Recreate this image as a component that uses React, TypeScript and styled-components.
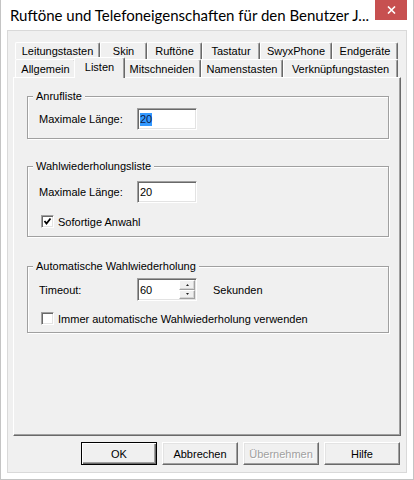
import styled, { createGlobalStyle, css } from 'styled-components'

const GlobalStyle = createGlobalStyle`
  html, body {
    margin: 0;
    padding: 0;
    background: #fff;
  }
  body {
    font-family: 'Liberation Sans', Arial, sans-serif;
    font-size: 11px;
    color: #000;
  }
  * {
    box-sizing: border-box;
  }
`

// Window frame
const Window = styled.div`
  width: 414px;
  height: 480px;
  display: flex;
  flex-direction: column;
  background: #fff;
  border: 1px solid #c4c4c4;
  border-top: none;
`

const TitleBar = styled.div`
  flex: none;
  height: 30px;
  display: flex;
  align-items: flex-start;
`

const Title = styled.div`
  font-family: Lato, 'Noto Sans', sans-serif;
  font-size: 15px;
  line-height: 20px;
  padding: 5px 0 0 9px;
  white-space: nowrap;
`

const CloseButton = styled.div`
  margin: 0 6px 0 auto;
  width: 32px;
  height: 20px;
  background: #c75050;
  display: flex;
  align-items: center;
  justify-content: center;
`

const Client = styled.div`
  flex: 1;
  margin: 0 6px 6px;
  border: 1px solid #d9d9d9;
  background: #f0f0f0;
  padding: 11px 5px 7px;
  display: flex;
  flex-direction: column;
`

// Tab control
const TabRow = styled.div<{ $h: number }>`
  flex: none;
  display: flex;
  height: ${(p) => p.$h}px;
  padding-left: 2px;
`

const Tab = styled.div<{ $w: number; $active?: boolean }>`
  width: ${(p) => p.$w}px;
  display: flex;
  align-items: center;
  justify-content: center;
  background: #f0f0f0;
  border-top: 1px solid #fff;
  border-left: 1px solid #fff;
  border-right: 1px solid #696969;
  border-radius: 2px 2px 0 0;
  box-shadow: inset -1px 0 #a0a0a0;
  white-space: nowrap;
  ${(p) =>
    p.$active &&
    css`
      width: ${p.$w + 4}px;
      margin: -2px -2px -1px;
      padding-bottom: 2px;
      position: relative;
      z-index: 1;
    `}
`

const Panel = styled.div`
  flex: none;
  height: 359px;
  border-top: 1px solid #fff;
  border-left: 1px solid #fff;
  border-right: 1px solid #696969;
  border-bottom: 1px solid #696969;
  box-shadow: inset -1px -1px #a0a0a0;
  padding: 18px 11px 0 13px;
`

// Group boxes
const Group = styled.div<{ $mt: number; $pb: number }>`
  margin-top: ${(p) => p.$mt}px;
  padding: 0 11px ${(p) => p.$pb}px;
  border: 1px solid #a0a0a0;
  box-shadow: inset 1px 1px #fff, 1px 1px #fff;
`

const Caption = styled.div`
  display: table;
  margin: -7px 0 0 -6px;
  padding: 0 3px;
  line-height: 13px;
  background: #f0f0f0;
`

const Row = styled.div<{ $mt: number; $h: number }>`
  display: flex;
  align-items: center;
  margin-top: ${(p) => p.$mt}px;
  height: ${(p) => p.$h}px;
`

const Label = styled.span`
  width: 98px;
`

const Field = styled.div<{ $h: number }>`
  width: 60px;
  height: ${(p) => p.$h}px;
  display: flex;
  align-items: center;
  padding: 1px 1px 1px 2px;
  background: #fff;
  border: 1px solid;
  border-color: #a0a0a0 #fff #fff #a0a0a0;
  box-shadow: inset 1px 1px #696969, inset -1px -1px #e3e3e3;
`

const Selected = styled.span`
  background: #3399ff;
  color: #0b1a4a;
  line-height: 13px;
`

const SpinColumn = styled.div`
  margin-left: auto;
  width: 16px;
  height: 100%;
  display: flex;
  flex-direction: column;
`

const SpinButton = styled.div`
  flex: 1;
  display: flex;
  align-items: center;
  justify-content: center;
  background: #f0f0f0;
  border: 1px solid;
  border-color: #fff #a0a0a0 #a0a0a0 #fff;
  box-shadow: inset -1px -1px #d4d4d4;
`

const Unit = styled.span`
  margin-left: 16px;
`

const CheckRow = styled(Row)`
  padding-left: 2px;
`

const CheckBox = styled.div`
  width: 13px;
  height: 13px;
  background: #fff;
  border: 1px solid;
  border-color: #a0a0a0 #fff #fff #a0a0a0;
  box-shadow: inset 1px 1px #696969, inset -1px -1px #e3e3e3;
  display: flex;
  align-items: center;
  justify-content: center;
`

const CheckText = styled.span`
  margin-left: 4px;
`

// Dialog buttons
const ButtonBar = styled.div`
  flex: none;
  display: flex;
  justify-content: flex-end;
  gap: 5px;
  margin-top: 6px;
  padding-right: 1px;
`

const Button = styled.div<{ $default?: boolean; $disabled?: boolean }>`
  width: 76px;
  height: 23px;
  display: flex;
  align-items: center;
  justify-content: center;
  background: #f0f0f0;
  border: 1px solid;
  border-color: #fff #696969 #696969 #fff;
  box-shadow: inset -1px -1px #a0a0a0, inset 1px 1px #e3e3e3;
  ${(p) =>
    p.$default &&
    css`
      border-color: #000;
      box-shadow: inset 1px 1px #fff, inset -1px -1px #696969,
        inset -2px -2px #a0a0a0;
    `}
  ${(p) =>
    p.$disabled &&
    css`
      color: #a0a0a0;
      text-shadow: 1px 1px #fff;
    `}
`

const topTabs = [
  { label: 'Leitungstasten', w: 85 },
  { label: 'Skin', w: 47 },
  { label: 'Ruftöne', w: 55 },
  { label: 'Tastatur', w: 58 },
  { label: 'SwyxPhone', w: 72 },
  { label: 'Endgeräte', w: 66 },
]

const frontTabs = [
  { label: 'Allgemein', w: 61 },
  { label: 'Listen', w: 47, active: true },
  { label: 'Mitschneiden', w: 78 },
  { label: 'Namenstasten', w: 82 },
  { label: 'Verknüpfungstasten', w: 115 },
]

// tiny up/down arrow of the spin buttons
const Arrow = ({ up }: { up?: boolean }) => (
  <svg width="3" height="2" viewBox="0 0 3 2">
    <path d={up ? 'M0 2 L1.5 0 L3 2 Z' : 'M0 0 L1.5 2 L3 0 Z'} fill="#222" />
  </svg>
)

const Check = () => (
  <svg width="9" height="9" viewBox="0 0 9 9">
    <polyline
      points="1.5,4 3.5,6.5 7.5,1.5"
      fill="none"
      stroke="#000"
      strokeWidth="1.8"
    />
  </svg>
)

export default function App() {
  return (
    <>
      <GlobalStyle />
      <Window>
        <TitleBar>
          <Title>Ruftöne und Telefoneigenschaften für den Benutzer J...</Title>
          <CloseButton>
            <svg width="9" height="8" viewBox="0 0 9 8">
              <path d="M1 0.5 L8 7.5 M8 0.5 L1 7.5" stroke="#fff" strokeWidth="1.6" />
            </svg>
          </CloseButton>
        </TitleBar>
        <Client>
          <TabRow $h={17}>
            {topTabs.map((t) => (
              <Tab key={t.label} $w={t.w}>
                {t.label}
              </Tab>
            ))}
          </TabRow>
          <TabRow $h={18}>
            {frontTabs.map((t) => (
              <Tab key={t.label} $w={t.w} $active={t.active}>
                {t.label}
              </Tab>
            ))}
          </TabRow>
          <Panel>
            <Group $mt={0} $pb={8}>
              <Caption>Anrufliste</Caption>
              <Row $mt={5} $h={22}>
                <Label>Maximale Länge:</Label>
                <Field $h={22}>
                  <Selected>20</Selected>
                </Field>
              </Row>
            </Group>
            <Group $mt={27} $pb={6}>
              <Caption>Wahlwiederholungsliste</Caption>
              <Row $mt={8} $h={22}>
                <Label>Maximale Länge:</Label>
                <Field $h={22}>20</Field>
              </Row>
              <CheckRow $mt={10} $h={17}>
                <CheckBox>
                  <Check />
                </CheckBox>
                <CheckText>Sofortige Anwahl</CheckText>
              </CheckRow>
            </Group>
            <Group $mt={29} $pb={5}>
              <Caption>Automatische Wahlwiederholung</Caption>
              <Row $mt={5} $h={23}>
                <Label>Timeout:</Label>
                <Field $h={23}>
                  60
                  <SpinColumn>
                    <SpinButton>
                      <Arrow up />
                    </SpinButton>
                    <SpinButton>
                      <Arrow />
                    </SpinButton>
                  </SpinColumn>
                </Field>
                <Unit>Sekunden</Unit>
              </Row>
              <CheckRow $mt={9} $h={17}>
                <CheckBox />
                <CheckText>Immer automatische Wahlwiederholung verwenden</CheckText>
              </CheckRow>
            </Group>
          </Panel>
          <ButtonBar>
            <Button $default>OK</Button>
            <Button>Abbrechen</Button>
            <Button $disabled>Übernehmen</Button>
            <Button>Hilfe</Button>
          </ButtonBar>
        </Client>
      </Window>
    </>
  )
}
